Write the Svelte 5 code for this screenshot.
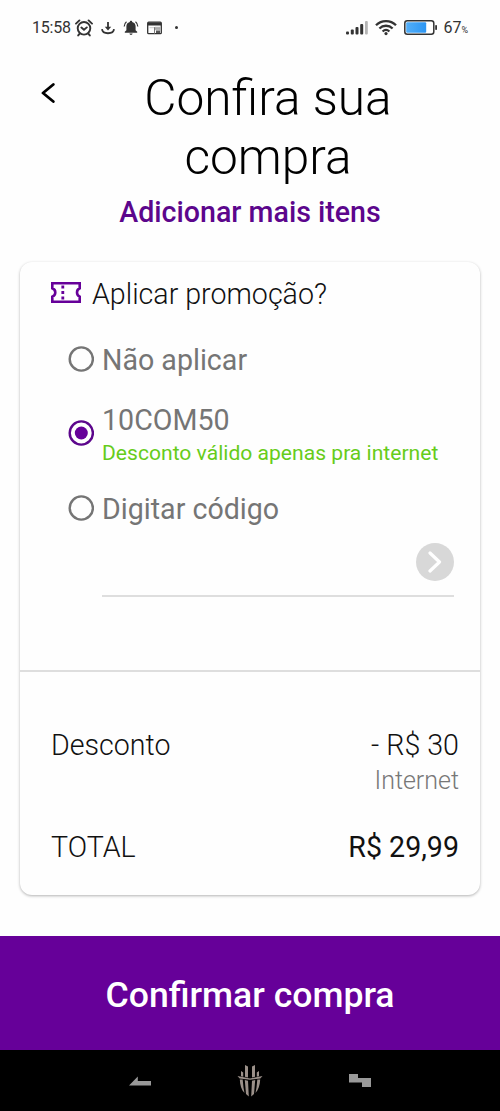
<!--
  Checkout review screen: promotion picker, order totals and confirm button.
-->
<script lang="ts">
  type Promo = { id: string; label: string; note?: string };

  const promos: Promo[] = [
    { id: 'none', label: 'Não aplicar' },
    { id: '10COM50', label: '10COM50', note: 'Desconto válido apenas pra internet' },
    { id: 'code', label: 'Digitar código' },
  ];

  let selected = $state('10COM50');
</script>

<div class="screen">
  <div class="status">
    <span class="clock">15:58</span>
    <svg class="alarm" width="18" height="18" viewBox="0 0 18 18" fill="none" stroke="#333" stroke-width="1.9" stroke-linecap="round">
      <circle cx="9" cy="9.3" r="6.3" />
      <path d="M1 4.6 4.4 1.4M17 4.6 13.6 1.4M6.4 8.6 9 10.8l2.8-2.4M4.5 14.8l-1.3 1.6M13.5 14.8l1.3 1.6" />
    </svg>
    <svg class="download" width="14" height="14" viewBox="0 0 14 14" fill="none" stroke="#333" stroke-width="1.8">
      <path d="M7 1v7M1 8.2c.5 5.4 11.5 5.4 12 0" />
      <path d="M3.8 5.8h6.4L7 9.6z" fill="#333" stroke="none" />
    </svg>
    <svg class="bell" width="16" height="16" viewBox="0 0 16 16" fill="#333">
      <path d="M8 .8c.8 0 1.2.5 1.2 1.2C11.600 2.600 12.600 4.200 12.600 6.600v3.600l1.600 1.600v1H1.800v-1l1.600-1.600V6.600C3.400 4.200 4.400 2.600 6.800 2c0-.7.4-1.200 1.200-1.200zM6.400 13.600h3.200c-.2 1.800-3 1.800-3.200 0z" />
      <path d="M1.200 6.500C1.300 4.500 2 3 3.500 1.800M14.800 6.500C14.700 4.500 14 3 12.500 1.800" fill="none" stroke="#333" stroke-width="1.200" />
    </svg>
    <svg class="news" width="15" height="14" viewBox="0 0 15 14">
      <rect x=".7" y="1.2" width="13.600" height="11.500" rx="1" fill="none" stroke="#333" stroke-width="1.300" />
      <path d="M1 1.500h13v3H1z" fill="#333" />
      <path d="M2.500 6.700h5M8 6.200h5v2.500H8z" stroke="#aaa" fill="#aaa" stroke-width=".6" />
      <path d="M9 9.500h4v2.500H9z" fill="#555" />
      <path d="M7.500 6.200v6.500" stroke="#777" />
    </svg>
    <i class="dot"></i>
    <svg class="signal" width="23" height="15" viewBox="0 0 23 15" fill="#333">
      <rect x="0" y="11.500" width="3" height="3" rx="1" />
      <rect x="4.800" y="9.500" width="3" height="5" rx="1" />
      <rect x="9.500" y="7" width="3" height="7.500" rx="1" />
      <rect x="14.200" y="4" width="3" height="10.500" rx="1" />
      <rect x="19" y="1" width="2.800" height="13.500" rx="1" fill="#b5b5b5" />
    </svg>
    <svg class="wifi" width="22" height="17" viewBox="0 0 22 17" fill="none" stroke="#333" stroke-width="2.300">
      <path d="M1 6.200c5.500-5.500 14.500-5.500 20 0M4.400 9.500c3.700-3.700 9.500-3.700 13.200 0M7.600 12.500c2-1.900 4.800-1.900 6.800 0" />
      <circle cx="11" cy="14.600" r="1.600" fill="#333" stroke="none" />
    </svg>
    <svg class="battery" width="33" height="15" viewBox="0 0 33 15">
      <defs>
        <linearGradient id="charge"><stop stop-color="#52aef8" /><stop offset="1" stop-color="#2d96f3" /></linearGradient>
      </defs>
      <rect x=".8" y=".8" width="29" height="13.400" rx="2.500" fill="#fff" stroke="#333" stroke-width="1.500" />
      <rect x="2.200" y="2.200" width="20" height="10.600" rx="1" fill="url(#charge)" />
      <rect x="31.200" y="5" width="1.800" height="5" rx=".8" fill="#333" />
    </svg>
    <span class="percent">67<small>%</small></span>
  </div>

  <header>
    <button class="back" aria-label="Voltar">
      <svg width="14" height="20" viewBox="0 0 14 20" fill="none" stroke="#000" stroke-width="2.800" stroke-linecap="round" stroke-linejoin="round">
        <path d="M12.300 1.500 2 10l10.300 8.500" />
      </svg>
    </button>
    <h1>Confira sua compra</h1>
  </header>
  <button class="more">Adicionar mais itens</button>

  <main class="card">
    <section class="promo">
      <h2>
        <svg width="30" height="21" viewBox="0 0 30 21" fill="none" stroke="#660099" stroke-width="2.600">
          <path d="M1.300 1.300h27.400v5c-3.600 1.500-3.600 6.900 0 8.400v5H1.300v-5c4-1.500 4-6.900 0-8.400z" />
          <path d="M11.800 3.600v3M11.800 9v3M11.800 14.400v3" stroke-width="2.800" />
        </svg>
        Aplicar promoção?
      </h2>

      <div class="options">
        {#each promos as promo (promo.id)}
          <button class="option" onclick={() => (selected = promo.id)}>
            <svg class="radio" class:checked={selected === promo.id} width="26" height="26" viewBox="0 0 26 26">
              <circle cx="13.300" cy="13" r="11.600" fill="none" stroke="currentColor" stroke-width="2.400" />
              {#if selected === promo.id}<circle cx="13.300" cy="13" r="6.500" fill="#660099" />{/if}
            </svg>
            <span class="label">
              {promo.label}
              {#if promo.note}<span class="note">{promo.note}</span>{/if}
            </span>
          </button>
        {/each}
      </div>

      <div class="code">
        <button class="send" aria-label="Aplicar código">
          <svg width="14" height="22" viewBox="0 0 14 22" fill="none" stroke="#fff" stroke-width="3.200" stroke-linecap="round" stroke-linejoin="round">
            <path d="M2 2l9.500 9L2 20" />
          </svg>
        </button>
      </div>
    </section>

    <section class="totals">
      <div class="row">
        <span>Desconto</span>
        <span class="amount">- R$ 30<span class="kind">Internet</span></span>
      </div>
      <div class="row">
        <span>TOTAL</span>
        <span class="total">R$ 29,99</span>
      </div>
    </section>
  </main>

  <button class="confirm">Confirmar compra</button>

  <nav>
    <svg width="22" height="10" viewBox="0 0 22 10" fill="#999"><path d="M0 9.500 8.800.5V5H22v4.500z" /></svg>
    <svg width="26" height="34" viewBox="0 0 26 34" fill="#9b9089">
      <path d="M8 1l3 1.500V13.500l-3-.7zM18 1l-3 1.500v11l3-.7zM4 7l2.200 1.500v4.300L4 12.300zM22 7l-2.200 1.500v4.300l2.200-.5z" />
      <path d="M.5 12 8 13.500l5 1.100 5-1.100 7.500-1.500-2.200 2.500-6.300.8-4 .5-4-.5-6.300-.8z" />
      <path d="M2.800 15.500h2.900l.8 8 1 5.500C4.500 26 3 21 2.800 15.500zM23.200 15.500h-2.900l-.8 8-1 5.500c2.800-3 4.500-8 4.700-13.500zM7.800 16l3.200.8.800 15.700-2.800-2.500zM18.200 16l-3.200.8-.8 15.700 2.800-2.500z" />
    </svg>
    <svg width="22" height="13" viewBox="0 0 22 13" fill="#999"><path d="M0 0h9v4h13v9h-9V8.500H0z" /></svg>
  </nav>
</div>

<style>
  :global(body) {
    background: #fefefe;
  }

  .screen {
    display: flex;
    flex-direction: column;
    width: 500px;
    height: 1111px;
    overflow: hidden;
    background: #fefefe;
    color: #111;
    font-family: Roboto, 'Liberation Sans', sans-serif;
  }

  button {
    padding: 0;
    border: 0;
    background: none;
    color: inherit;
    font: inherit;
  }

  svg {
    flex-shrink: 0;
  }

  .status {
    display: flex;
    align-items: center;
    box-sizing: border-box;
    height: 69px;
    padding: 0 32px 14px;
    color: #333;
    font-size: 16px;
  }

  .clock {
    width: 43px;
    letter-spacing: -0.2px;
  }

  .download,
  .bell,
  .news {
    margin-left: 8px;
  }

  .dot {
    width: 3px;
    height: 3px;
    margin-left: 13px;
    border-radius: 50%;
    background: #333;
  }

  .signal {
    margin-left: auto;
  }

  .wifi {
    margin-left: 6px;
  }

  .battery {
    margin-left: 7px;
  }

  .percent {
    margin-left: 6px;
  }

  small {
    font-size: 9px;
  }

  header {
    display: grid;
    grid-template-columns: 34px 1fr;
    height: 118px;
    padding: 0 32px 0 34px;
  }

  .back {
    align-self: start;
    justify-self: center;
    height: 20px;
    margin: 14px 0 0 -7px;
  }

  .back svg,
  .send svg {
    display: block;
  }

  h1 {
    width: 270px;
    margin: 0 auto;
    font-size: 49.6px;
    font-weight: 300;
    line-height: 59px;
    text-align: center;
    color: #000;
  }

  .more {
    height: 34px;
    margin: 8px auto 33px;
    color: #5c068c;
    font-size: 28.6px;
    font-weight: 500;
    line-height: 34px;
  }

  .card {
    display: flex;
    flex-direction: column;
    box-sizing: border-box;
    height: 633px;
    margin: 0 20px 41px;
    border-radius: 12px;
    background: #fefefe;
    box-shadow: 0 1px 3px rgba(0, 0, 0, 0.3);
  }

  .promo {
    box-sizing: border-box;
    height: 411px;
    padding: 14px 26px 0 31px;
    border-bottom: 2px solid #dedede;
  }

  h2 {
    display: flex;
    align-items: center;
    gap: 11px;
    margin: 0;
    font-size: 28.6px;
    font-weight: 300;
    line-height: 36px;
    white-space: nowrap;
  }

  h2 svg {
    margin-top: -3px;
  }

  .options {
    display: flex;
    flex-direction: column;
    align-items: flex-start;
    gap: 24px;
    padding: 30px 0 0 17px;
  }

  .option {
    display: flex;
    align-items: center;
    gap: 8px;
    color: #757575;
    font-size: 28.6px;
    line-height: 36px;
    text-align: left;
    white-space: nowrap;
  }

  .radio {
    margin-top: -2px;
  }

  .radio.checked {
    margin-top: -3px;
    color: #5c068c;
  }

  .note {
    display: block;
    color: #66cc1a;
    font-size: 21.1px;
    line-height: 29px;
  }

  .code {
    display: flex;
    justify-content: flex-end;
    box-sizing: border-box;
    height: 54px;
    margin: 16px 0 0 51px;
    border-bottom: 2px solid #dedede;
  }

  .send {
    display: grid;
    place-items: center;
    width: 38px;
    height: 38px;
    border-radius: 50%;
    background: #d8d8d8;
  }

  .totals {
    padding: 55px 21px 0 31px;
    font-size: 28.6px;
    font-weight: 300;
    line-height: 36px;
  }

  .row {
    display: flex;
    justify-content: space-between;
    margin-bottom: 30px;
  }

  .amount {
    text-align: right;
  }

  .kind {
    display: block;
    color: #777;
    font-size: 25px;
    line-height: 36px;
  }

  .total {
    font-weight: 400;
  }

  .confirm {
    height: 114px;
    padding-top: 4px;
    background: #660099;
    color: #fff;
    font-size: 35.6px;
    font-weight: 500;
  }

  nav {
    display: flex;
    flex: 1;
    align-items: center;
    justify-content: space-between;
    padding: 0 129px 0 129px;
    background: #000;
  }
</style>
